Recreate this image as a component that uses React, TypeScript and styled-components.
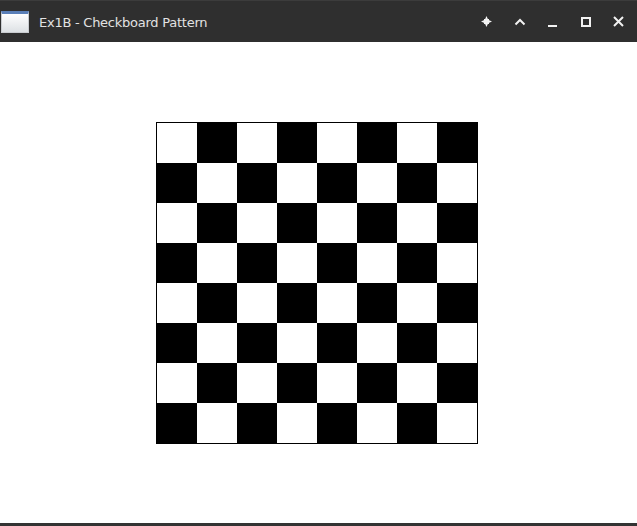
import React from "react";
import styled, { createGlobalStyle } from "styled-components";

const Global = createGlobalStyle`
  html, body { margin: 0; padding: 0; background: #ffffff; }
  body { font-family: "DejaVu Sans", "Noto Sans", sans-serif; }
`;

const Frame = styled.div`
  width: 637px;
  height: 526px;
  display: flex;
  flex-direction: column;
  overflow: hidden;
`;

const TitleBar = styled.div`
  height: 42px;
  flex: none;
  background: #2f2f2f;
  border-top: 1px solid #3c3c3c;
  box-sizing: border-box;
  display: flex;
  align-items: center;
  padding-left: 1px;
`;

const WinIcon = styled.div`
  width: 28px;
  height: 22px;
  box-sizing: border-box;
  border: 1px solid #c9ccd0;
  border-top: 3px solid #5a7fb8;
  background: linear-gradient(#ffffff, #dde1e4);
  margin-top: 1px;
`;

const Title = styled.div`
  margin-left: 10px;
  color: #e2e2e2;
  font-size: 13px;
  font-family: "DejaVu Sans", sans-serif;
  letter-spacing: -0.25px;
  margin-top: 1px;
`;

const Controls = styled.div`
  margin-left: auto;
  display: flex;
  align-items: center;
  padding-right: 2px;
`;

const Ctl = styled.div`
  width: 33px;
  height: 20px;
  display: flex;
  align-items: center;
  justify-content: center;
`;

const Content = styled.div`
  flex: 1;
  background: #ffffff;
  padding: 80px 0 0 156px;
`;

const Board = styled.div`
  display: grid;
  grid-template-columns: repeat(8, 40px);
  grid-template-rows: repeat(8, 40px);
  width: 320px;
  border: 1px solid #000;
`;

const Cell = styled.div<{ $dark: boolean }>`
  background: ${(p) => (p.$dark ? "#000" : "#fff")};
`;

const BottomEdge = styled.div`
  height: 3px;
  flex: none;
  background: #333;
`;

const stroke = { stroke: "#f2f2f2", strokeWidth: 2, fill: "none" } as const;

export default function App() {
  const cells = [];
  for (let r = 0; r < 8; r++)
    for (let c = 0; c < 8; c++) cells.push(<Cell key={`${r}-${c}`} $dark={(r + c) % 2 === 1} />);
  return (
    <>
      <Global />
      <Frame>
        <TitleBar>
          <WinIcon />
          <Title>Ex1B - Checkboard Pattern</Title>
          <Controls>
            <Ctl>
              <svg width="11" height="11" viewBox="0 0 11 11">
                <path d="M5.5 0 L7.2 3.8 L11 5.5 L7.2 7.2 L5.5 11 L3.8 7.2 L0 5.5 L3.8 3.8 Z" fill="#f2f2f2" />
                <rect x="3" y="3" width="5" height="5" fill="#f2f2f2" />
              </svg>
            </Ctl>
            <Ctl>
              <svg width="12" height="8" viewBox="0 0 12 8">
                <path d="M1.5 6.5 L6 2 L10.5 6.5" {...stroke} />
              </svg>
            </Ctl>
            <Ctl>
              <svg width="12" height="12" viewBox="0 0 12 12">
                <path d="M1 10 H10" {...stroke} />
              </svg>
            </Ctl>
            <Ctl>
              <svg width="10" height="10" viewBox="0 0 10 10">
                <rect x="1" y="1" width="8" height="8" {...stroke} />
              </svg>
            </Ctl>
            <Ctl>
              <svg width="11" height="11" viewBox="0 0 11 11">
                <path d="M1 1 L10 10 M10 1 L1 10" {...stroke} />
              </svg>
            </Ctl>
          </Controls>
        </TitleBar>
        <Content>
          <Board>{cells}</Board>
        </Content>
        <BottomEdge />
      </Frame>
    </>
  );
}
